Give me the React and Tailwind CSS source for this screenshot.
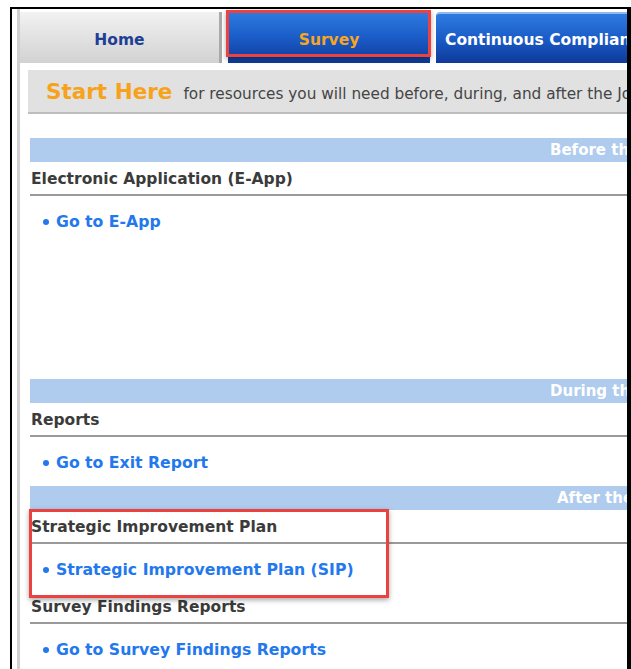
const font = { fontFamily: '"DejaVu Sans", Verdana, sans-serif' }

function PhaseBar({ label, offset }) {
  return (
    <div className={`h-[24px] bg-[#afcbee] flex items-center overflow-hidden whitespace-nowrap ${offset}`}>
      <span className="text-white font-bold text-[15px]">{label}</span>
    </div>
  )
}

function SectionHead({ title }) {
  return (
    <div className="h-[34px] border-b-2 border-[#9a9a9a] pl-[1px] pt-[5px]">
      <span className="text-[#3b3b3b] font-bold text-[15.5px] leading-[20px]">{title}</span>
    </div>
  )
}

function LinkRow({ text, h }) {
  return (
    <div className={`${h} pl-[13px] pt-[15px]`}>
      <a href="#" className="flex items-center gap-[7px] text-[#2478ee] font-bold text-[15.7px] leading-[22px]">
        <span className="w-[6px] h-[6px] rounded-full bg-[#2478ee]" />
        {text}
      </a>
    </div>
  )
}

export default function App() {
  return (
    <div className="relative w-[631px] h-[669px] bg-white overflow-hidden" style={font}>
      <div className="ml-[10px] mt-[7px] w-[621px] h-[662px] border-t-2 border-l-2 border-r-4 border-black flex">
        <div className="w-[8px] border-r-[3px] border-[#d0d0d0] shrink-0" />
        <div className="flex-1 min-w-0">
          {/* tab strip */}
          <div className="flex h-[51px] mt-[3px] gap-[6px]">
            <div className="w-[202px] shrink-0 bg-gradient-to-b from-[#f2f2f2] to-[#d2d2d2] border-r-[3px] border-[#a9a9a9] flex items-center justify-center pt-[7px]">
              <span className="text-[#1f3f95] font-bold text-[15.5px]">Home</span>
            </div>
            <div className="w-[202px] shrink-0 bg-gradient-to-b from-[#2e7be0] via-[#1b5cc8] to-[#0f3a9a] flex items-center justify-center pt-[7px]">
              <span className="text-[#f6a623] font-bold text-[15.5px]">Survey</span>
            </div>
            <div className="flex-1 min-w-0 rounded-tl-[4px] border-t-2 border-[#8fb8ee] bg-gradient-to-b from-[#2e7be0] via-[#1b5cc8] to-[#0f3a9a] flex items-center pl-[9px] pt-[5px] overflow-hidden whitespace-nowrap">
              <span className="text-white font-bold text-[15.5px]">Continuous Compliance</span>
            </div>
          </div>

          {/* intro bar */}
          <div className="mt-[7px] ml-[8px] h-[44px] bg-[#e1e1e1] border-b-2 border-[#bdbdbd] flex items-center gap-[11px] pl-[18px] whitespace-nowrap overflow-hidden">
            <span className="text-[#f7a21b] font-bold text-[21.5px] pt-[2px]">Start Here</span>
            <span className="text-[#454545] text-[15.3px] pt-[6px]">for resources you will need before, during, and after the Joint Commission survey</span>
          </div>

          <div className="ml-[10px] mt-[24px]">
            <PhaseBar label="Before the Survey" offset="pl-[520px]" />
            <SectionHead title="Electronic Application (E-App)" />
            <LinkRow text="Go to E-App" h="h-[183px]" />

            <PhaseBar label="During the Survey" offset="pl-[520px]" />
            <SectionHead title="Reports" />
            <LinkRow text="Go to Exit Report" h="h-[49px]" />

            <PhaseBar label="After the Survey" offset="pl-[527px]" />
            <SectionHead title="Strategic Improvement Plan" />
            <LinkRow text="Strategic Improvement Plan (SIP)" h="h-[46px]" />
            <SectionHead title="Survey Findings Reports" />
            <LinkRow text="Go to Survey Findings Reports" h="h-[48px]" />
          </div>
        </div>
      </div>

      {/* callout frames */}
      <div className="absolute left-[226px] top-[10px] w-[205px] h-[47px] border-[3px] border-[#ea4141] shadow-[0_2px_5px_rgba(0,0,0,0.35)]" />
      <div className="absolute left-[29px] top-[509px] w-[360px] h-[89px] border-[3px] border-[#ea4141] shadow-[0_2px_5px_rgba(0,0,0,0.35)]" />
    </div>
  )
}
